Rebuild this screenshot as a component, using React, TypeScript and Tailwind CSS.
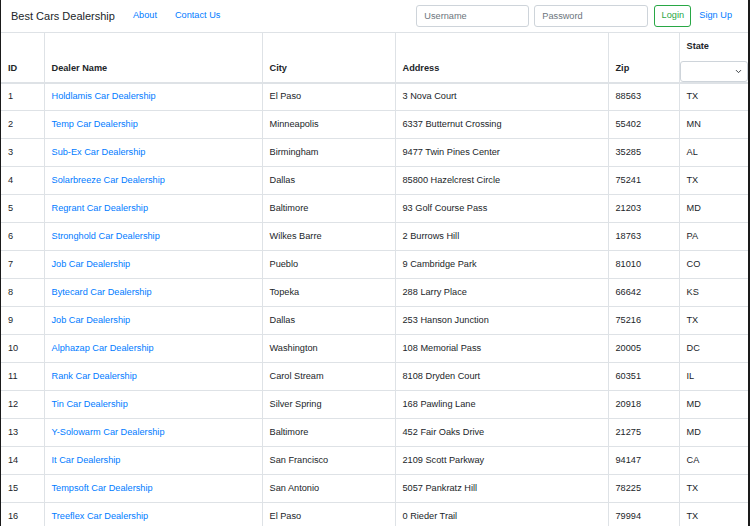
import { ChevronDown } from 'lucide-react';

type Dealer = {
  id: number;
  name: string;
  city: string;
  address: string;
  zip: string;
  state: string;
};

const dealers: Dealer[] = [
  { id: 1, name: 'Holdlamis Car Dealership', city: 'El Paso', address: '3 Nova Court', zip: '88563', state: 'TX' },
  { id: 2, name: 'Temp Car Dealership', city: 'Minneapolis', address: '6337 Butternut Crossing', zip: '55402', state: 'MN' },
  { id: 3, name: 'Sub-Ex Car Dealership', city: 'Birmingham', address: '9477 Twin Pines Center', zip: '35285', state: 'AL' },
  { id: 4, name: 'Solarbreeze Car Dealership', city: 'Dallas', address: '85800 Hazelcrest Circle', zip: '75241', state: 'TX' },
  { id: 5, name: 'Regrant Car Dealership', city: 'Baltimore', address: '93 Golf Course Pass', zip: '21203', state: 'MD' },
  { id: 6, name: 'Stronghold Car Dealership', city: 'Wilkes Barre', address: '2 Burrows Hill', zip: '18763', state: 'PA' },
  { id: 7, name: 'Job Car Dealership', city: 'Pueblo', address: '9 Cambridge Park', zip: '81010', state: 'CO' },
  { id: 8, name: 'Bytecard Car Dealership', city: 'Topeka', address: '288 Larry Place', zip: '66642', state: 'KS' },
  { id: 9, name: 'Job Car Dealership', city: 'Dallas', address: '253 Hanson Junction', zip: '75216', state: 'TX' },
  { id: 10, name: 'Alphazap Car Dealership', city: 'Washington', address: '108 Memorial Pass', zip: '20005', state: 'DC' },
  { id: 11, name: 'Rank Car Dealership', city: 'Carol Stream', address: '8108 Dryden Court', zip: '60351', state: 'IL' },
  { id: 12, name: 'Tin Car Dealership', city: 'Silver Spring', address: '168 Pawling Lane', zip: '20918', state: 'MD' },
  { id: 13, name: 'Y-Solowarm Car Dealership', city: 'Baltimore', address: '452 Fair Oaks Drive', zip: '21275', state: 'MD' },
  { id: 14, name: 'It Car Dealership', city: 'San Francisco', address: '2109 Scott Parkway', zip: '94147', state: 'CA' },
  { id: 15, name: 'Tempsoft Car Dealership', city: 'San Antonio', address: '5057 Pankratz Hill', zip: '78225', state: 'TX' },
  { id: 16, name: 'Treeflex Car Dealership', city: 'El Paso', address: '0 Rieder Trail', zip: '79994', state: 'TX' },
];

function Navbar() {
  return (
    <nav className="flex h-8 items-center pl-[10px] pr-[16px]">
      <span className="text-[11px] text-[#212529]">Best Cars Dealership</span>
      <a className="ml-[18px] text-[9.2px] text-[#007bff]">About</a>
      <a className="ml-[18px] text-[9.2px] text-[#007bff]">Contact Us</a>
      <div className="ml-auto flex items-center">
        <input
          placeholder="Username"
          className="h-[22px] w-[113px] rounded-[3px] border border-[#ced4da] px-[7px] text-[9.2px] placeholder:text-[#6c757d] outline-none"
        />
        <input
          placeholder="Password"
          className="ml-[5px] h-[22px] w-[114px] rounded-[3px] border border-[#ced4da] px-[7px] text-[9.2px] placeholder:text-[#6c757d] outline-none"
        />
        <button className="ml-[6px] h-[22px] w-[37px] rounded-[3px] border border-[#28a745] text-[9.2px] text-[#28a745]">
          Login
        </button>
        <a className="ml-[8px] text-[9.2px] text-[#007bff]">Sign Up</a>
      </div>
    </nav>
  );
}

const th = 'border border-[#dee2e6] border-b-2 px-[7px] pb-[6px] align-bottom text-left text-[9.2px] font-bold text-[#212529]';
const td = 'border border-[#dee2e6] px-[7px] h-[28px] align-middle text-[9.2px] text-[#212529]';

export default function App() {
  return (
    <div
      className="h-[526px] w-[750px] overflow-hidden border-l border-r-2 border-l-[#1a1a1a] border-r-[#1a1a1a] bg-white"
      style={{ fontFamily: '"Liberation Sans", Arial, sans-serif' }}
    >
      <Navbar />
      <table className="w-full table-fixed border-collapse">
        <colgroup>
          <col className="w-[43px]" />
          <col className="w-[218px]" />
          <col className="w-[133px]" />
          <col className="w-[213px]" />
          <col className="w-[71px]" />
          <col />
        </colgroup>
        <thead>
          <tr className="h-[50px]">
            <th className={th + ' border-l-0'}>ID</th>
            <th className={th}>Dealer Name</th>
            <th className={th}>City</th>
            <th className={th}>Address</th>
            <th className={th}>Zip</th>
            <th className="border border-[#dee2e6] border-b-2 border-r-0 p-0 align-bottom text-left text-[9.2px] font-bold text-[#212529]">
              <div className="px-[7px] pb-[7px]">State</div>
              <div className="flex h-[21px] items-center justify-end rounded-[3px] border border-[#ced4da] pr-[4px]">
                <ChevronDown className="h-[9px] w-[9px] text-[#343a40]" strokeWidth={2.5} />
              </div>
            </th>
          </tr>
        </thead>
        <tbody>
          {dealers.map((d) => (
            <tr key={d.id}>
              <td className={td + ' border-l-0'}>{d.id}</td>
              <td className={td}>
                <a className="text-[#007bff]">{d.name}</a>
              </td>
              <td className={td}>{d.city}</td>
              <td className={td}>{d.address}</td>
              <td className={td}>{d.zip}</td>
              <td className={td + ' border-r-0'}>{d.state}</td>
            </tr>
          ))}
        </tbody>
      </table>
    </div>
  );
}
